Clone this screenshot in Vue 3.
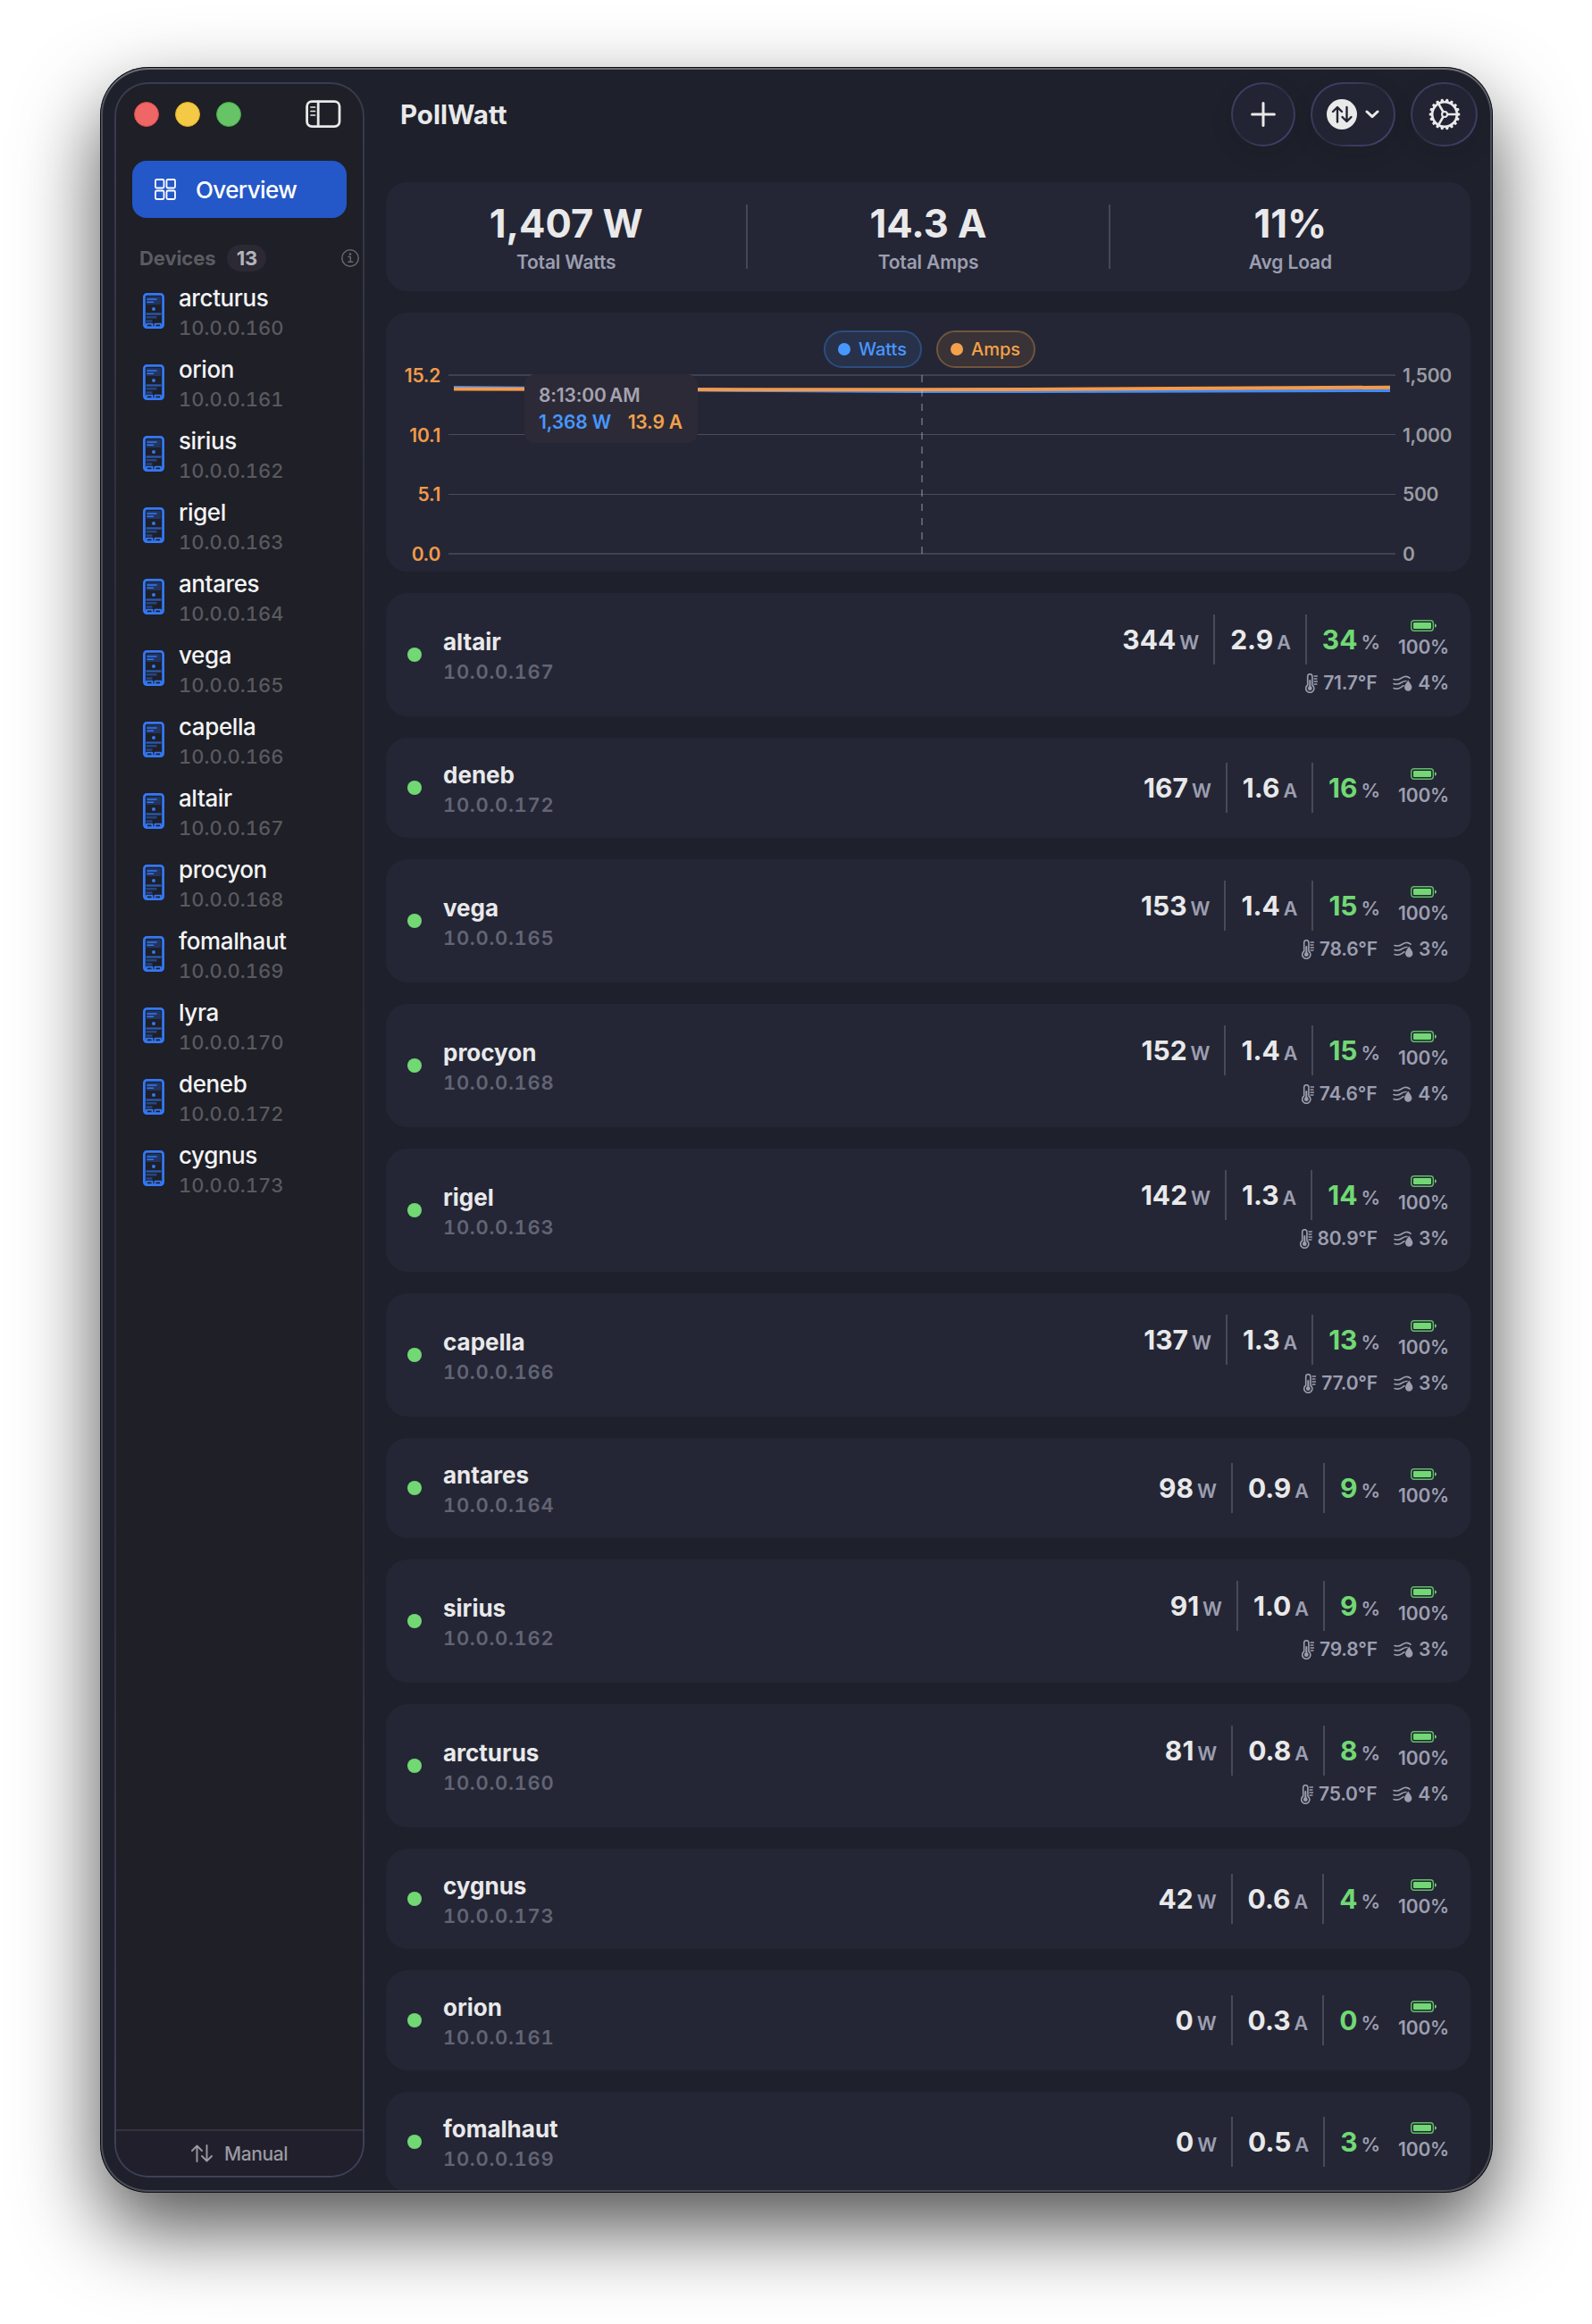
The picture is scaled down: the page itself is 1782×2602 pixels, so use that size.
<template>
  <div class="desktop">
    <div class="window">
      <aside class="sidebar">
        <div class="titlebar">
          <span class="light red"></span>
          <span class="light yellow"></span>
          <span class="light green"></span>
          <svg class="toggle" viewBox="0 0 40 32" width="40" height="32">
            <rect x="1.6" y="1.6" width="36.400" height="28" rx="5.500" class="line" />
            <path d="M14.200 2v27.500" class="line" />
            <path d="M6 8h4.500M6 12.500h4.500M6 17h4.500" class="line thin" />
          </svg>
        </div>

        <nav class="overview">
          <svg viewBox="0 0 24 24" width="24" height="24">
            <rect x="1" y="1" width="9.500" height="9.500" rx="1.500" />
            <rect x="13.500" y="1" width="9.500" height="9.500" rx="1.500" />
            <rect x="1" y="13.500" width="9.500" height="9.500" rx="1.500" />
            <rect x="13.500" y="13.500" width="9.500" height="9.500" rx="1.500" />
          </svg>
          <span>Overview</span>
        </nav>

        <div class="section">
          <span class="section-title">Devices</span>
          <span class="badge">{{ sidebarDevices.length }}</span>
          <svg class="info" viewBox="0 0 20 20" width="20" height="20">
            <circle cx="10" cy="10" r="9.200" />
            <path d="M8 8.500h2.300v5.600M7.800 14.200h5" />
            <circle cx="10" cy="5.600" r="0.700" />
          </svg>
        </div>

        <ul class="devices">
          <li v-for="device in sidebarDevices" :key="device.ip">
            <svg viewBox="0 0 24 40" width="24" height="40">
              <rect x="4" y="4" width="16" height="9" class="tint" />
              <rect x="1.400" y="1.400" width="21.200" height="37.200" rx="3" class="case" />
              <path d="M5 7h10M5 10.300h6.500" class="bright" />
              <circle cx="12" cy="18" r="2" class="dot" />
              <path d="M3.500 23.500h17" class="dim" />
              <path d="M3.500 27.300h12M3.500 31.500h7" class="dimmer" />
              <path d="M4 37v-2.300h6.500v2.300M13.500 37v-2.300h6.500v2.300" class="bright feet" />
            </svg>
            <div>
              <p class="name">{{ device.name }}</p>
              <p class="ip">{{ device.ip }}</p>
            </div>
          </li>
        </ul>

        <footer class="mode">
          <svg viewBox="0 0 24 20" width="24" height="20">
            <path d="M6.500 19V1.500M1 7l5.500-5.500L12 7M17.500 1v17.500M12 13l5.500 5.500L23 13" />
          </svg>
          <span>Manual</span>
        </footer>
      </aside>

      <main class="main">
        <header class="toolbar">
          <h1>PollWatt</h1>
          <button class="tool add">
            <svg viewBox="0 0 28 28" width="28" height="28">
              <path d="M14 1.600v24.800M1.600 14h24.800" />
            </svg>
          </button>
          <button class="tool sort">
            <svg viewBox="0 0 34 34" width="34" height="34">
              <circle cx="17" cy="17" r="17" class="disc" />
              <path d="M12 25.500V9.500M7 14l5-5 5 5M22.500 9v15.500M17.500 20l5 5 5-5" class="arrows" />
            </svg>
            <svg viewBox="0 0 16 10" width="16" height="10">
              <path d="M2 2l6 5.600L14 2" />
            </svg>
          </button>
          <button class="tool gear">
            <svg viewBox="-18 -18 36 36" width="36" height="36">
              <circle r="13.800" />
              <path
                v-for="n in 18"
                :key="n"
                d="M-1.400 -14.500L-0.700 -16.600H0.700L1.400 -14.500Z"
                class="tooth"
                :transform="`rotate(${n * 20 - 10})`"
              />
              <circle r="3" class="hub" />
              <path d="M3.500 0H13M-1.700 -3L-6.700 -11.600M-1.700 3L-6.700 11.600" />
            </svg>
          </button>
        </header>

        <section class="card summary">
          <div v-for="item in totals" :key="item.label" class="total">
            <strong>{{ item.value }}</strong>
            <span>{{ item.label }}</span>
          </div>
        </section>

        <section class="card chart">
          <div class="legend">
            <span class="pill watts"><i></i>Watts</span>
            <span class="pill amps"><i></i>Amps</span>
          </div>
          <div class="plot">
            <div class="axis left">
              <span v-for="tick in ampTicks" :key="tick">{{ tick }}</span>
            </div>
            <svg class="lines" viewBox="0 0 1060 200" width="1060" height="200">
              <path d="M0 0H1060M0 200H1060" class="grid" />
              <path d="M0 66.500H1060M0 133.500H1060" class="grid fine" />
              <path d="M6 14C200 15 350 17.800 530 18S900 17.500 1054 17" class="series watts" />
              <path d="M6 15.500C200 16 350 16.500 530 16.300S900 14 1054 13.700" class="series amps" />
              <path d="M530 0V200" class="cursor" />
            </svg>
            <div class="axis right">
              <span v-for="tick in wattTicks" :key="tick">{{ tick }}</span>
            </div>
            <div class="tooltip">
              <p>8:13:00&#8201;AM</p>
              <p class="readings"><span class="w">1,368 W</span><span class="a">13.9 A</span></p>
            </div>
          </div>
        </section>

        <section v-for="row in rows" :key="row.ip" class="card row">
          <span class="status"></span>
          <div class="who">
            <p class="name">{{ row.name }}</p>
            <p class="ip">{{ row.ip }}</p>
          </div>
          <div class="stats">
            <div class="metrics">
              <span class="metric"><b>{{ row.watts }}</b><small>W</small></span>
              <span class="metric"><b>{{ row.amps }}</b><small>A</small></span>
              <span class="metric load"><b>{{ row.load }}</b><small>%</small></span>
              <span class="battery">
                <svg viewBox="0 0 29 13" width="29" height="13">
                  <rect x="0.700" y="0.700" width="24.600" height="11.600" rx="3" class="shell" />
                  <rect x="3" y="3" width="20" height="7" rx="1" />
                  <path d="M27 4.300c2.400 0.800 2.400 3.600 0 4.400z" />
                </svg>
                100%
              </span>
            </div>
            <!-- only some units have a temperature and humidity probe -->
            <div v-if="row.temp" class="probe">
              <svg viewBox="0 0 14 22" width="14" height="22">
                <path d="M2.700 13V3.300a2.600 2.600 0 0 1 5.200 0V13a4.600 4.600 0 1 1-5.200 0z" />
                <path d="M5.300 8v8" class="mercury" />
                <circle cx="5.300" cy="16.700" r="2.400" class="fill" />
                <path d="M10 3h3.500M10 6h3M10 9h3.500M10 12h3" class="thin" />
              </svg>
              <span>{{ row.temp }}°F</span>
              <svg class="wind" viewBox="0 0 22 18" width="22" height="18">
                <path d="M1 4.500c4 1.500 6 0.500 9-1.500s6-2.500 9 0.200M1 9.500c4 1.500 6 0.500 9-1.500 2-1.300 3.500-1.700 5-1.500M1 14.500c4 1.500 6 0.500 8.500-1.200 1-.8 1.700-1.300 2.500-1.500" />
                <path d="M17.200 5.500c1.500 3 4.200 5 4.200 8a4.200 4.200 0 0 1-8.400 0c0-3 2.700-5 4.200-8z" class="fill" />
              </svg>
              <span>{{ row.humidity }}%</span>
            </div>
          </div>
        </section>
      </main>
    </div>
  </div>
</template>

<script setup>
const sidebarDevices = [
  { name: "arcturus", ip: "10.0.0.160" },
  { name: "orion", ip: "10.0.0.161" },
  { name: "sirius", ip: "10.0.0.162" },
  { name: "rigel", ip: "10.0.0.163" },
  { name: "antares", ip: "10.0.0.164" },
  { name: "vega", ip: "10.0.0.165" },
  { name: "capella", ip: "10.0.0.166" },
  { name: "altair", ip: "10.0.0.167" },
  { name: "procyon", ip: "10.0.0.168" },
  { name: "fomalhaut", ip: "10.0.0.169" },
  { name: "lyra", ip: "10.0.0.170" },
  { name: "deneb", ip: "10.0.0.172" },
  { name: "cygnus", ip: "10.0.0.173" },
];

const totals = [
  { value: "1,407 W", label: "Total Watts" },
  { value: "14.3 A", label: "Total Amps" },
  { value: "11%", label: "Avg Load" },
];

const ampTicks = ["15.2", "10.1", "5.1", "0.0"];
const wattTicks = ["1,500", "1,000", "500", "0"];

// sorted by watts, highest first
const rows = [
  { name: "altair", ip: "10.0.0.167", watts: 344, amps: "2.9", load: 34, temp: "71.7", humidity: 4 },
  { name: "deneb", ip: "10.0.0.172", watts: 167, amps: "1.6", load: 16 },
  { name: "vega", ip: "10.0.0.165", watts: 153, amps: "1.4", load: 15, temp: "78.6", humidity: 3 },
  { name: "procyon", ip: "10.0.0.168", watts: 152, amps: "1.4", load: 15, temp: "74.6", humidity: 4 },
  { name: "rigel", ip: "10.0.0.163", watts: 142, amps: "1.3", load: 14, temp: "80.9", humidity: 3 },
  { name: "capella", ip: "10.0.0.166", watts: 137, amps: "1.3", load: 13, temp: "77.0", humidity: 3 },
  { name: "antares", ip: "10.0.0.164", watts: 98, amps: "0.9", load: 9 },
  { name: "sirius", ip: "10.0.0.162", watts: 91, amps: "1.0", load: 9, temp: "79.8", humidity: 3 },
  { name: "arcturus", ip: "10.0.0.160", watts: 81, amps: "0.8", load: 8, temp: "75.0", humidity: 4 },
  { name: "cygnus", ip: "10.0.0.173", watts: 42, amps: "0.6", load: 4 },
  { name: "orion", ip: "10.0.0.161", watts: 0, amps: "0.3", load: 0 },
  { name: "fomalhaut", ip: "10.0.0.169", watts: 0, amps: "0.5", load: 3 },
];
</script>

<style>
body {
  background: #fff;
}
</style>

<style scoped>
* {
  box-sizing: border-box;
}

p,
h1,
ul {
  margin: 0;
  padding: 0;
}

svg {
  display: block;
  flex: none;
  fill: none;
  stroke-linecap: round;
  stroke-linejoin: round;
}

.desktop {
  height: 2602px;
  padding: 75px 0 0 112px;
  overflow: hidden;
}

.window {
  position: relative;
  display: flex;
  width: 1559px;
  height: 2380px;
  padding: 17px 25px 0 16px;
  border-radius: 54px;
  overflow: hidden;
  background: #1e202b;
  box-shadow: 0 40px 90px rgba(0, 0, 0, 0.68);
  font-family: Inter, "Liberation Sans", sans-serif;
  color: #e9e9ea;
}

.window::after {
  content: "";
  position: absolute;
  inset: 0;
  border-radius: 54px;
  box-shadow:
    inset 0 0 0 1px #0b0c10,
    inset 0 2px 0 1px #6a6e73,
    inset 0 0 0 3px #4a4c57;
}

.sidebar {
  display: flex;
  flex-direction: column;
  flex: none;
  width: 280px;
  height: 2346px;
  border: 2px solid transparent;
  border-radius: 38px;
  background:
    linear-gradient(#1e1f27, #1e1f27) padding-box,
    linear-gradient(170deg, #3a3c50, #2a2b38 30%, #2c2d3a 70%, #41415d) border-box;
}

.titlebar {
  display: flex;
  align-items: center;
  height: 68px;
  margin-bottom: 18px;
  padding-left: 20px;
}

.light {
  width: 28px;
  height: 28px;
  margin-right: 18px;
  border-radius: 50%;
}

.light.red {
  background: #ee6666;
  border: 1px solid #dc4a48;
}

.light.yellow {
  background: #f3c945;
  border: 1px solid #dfae22;
}

.light.green {
  background: #66c466;
  border: 1px solid #43ac43;
}

.toggle {
  margin-left: 54px;
}

.toggle .line {
  stroke: #e9e9e9;
  stroke-width: 2.8;
}

.toggle .thin {
  stroke-width: 1.7;
}

.overview {
  display: flex;
  align-items: center;
  gap: 22px;
  width: 240px;
  height: 64px;
  margin-left: 18px;
  padding-left: 25px;
  border-radius: 16px;
  background: #2458c9;
  color: #fff;
  font-size: 26px;
  font-weight: 500;
  letter-spacing: -0.6px;
}

.overview svg {
  stroke: #fff;
  stroke-width: 1.8;
}

.section {
  display: flex;
  align-items: center;
  height: 38px;
  margin: 26px 4px 0 26px;
  font-size: 22px;
  font-weight: 700;
  letter-spacing: -0.1px;
}

.section-title {
  color: #5b5b61;
}

.badge {
  margin-left: 13px;
  width: 44px;
  border-radius: 15px;
  background: #2a2934;
  color: #b4b4b8;
  line-height: 30px;
  text-align: center;
}

.info {
  margin-left: auto;
  stroke: #66666c;
  stroke-width: 1.5;
}

.devices {
  flex: 1;
  list-style: none;
}

.devices li {
  display: flex;
  align-items: center;
  gap: 16px;
  height: 80px;
  padding-left: 30px;
}

.devices div {
  margin-top: 3px;
}

.name {
  font-size: 26px;
  line-height: 34px;
}

.ip {
  font-size: 22px;
  line-height: 32px;
  font-variant-numeric: tabular-nums;
}

.devices .name {
  color: #f4f4f4;
  font-weight: 500;
  letter-spacing: -0.4px;
}

.devices .ip {
  color: #59595e;
  font-weight: 500;
}

.case {
  stroke: #3478f6;
  stroke-width: 2.8;
}

.tint {
  fill: #22355f;
}

.bright {
  stroke: #3478f6;
  stroke-width: 1.6;
}

.feet {
  stroke-width: 1.8;
}

.dot {
  fill: #3478f6;
}

.dim {
  stroke: #2a58ad;
  stroke-width: 2.4;
  stroke-linecap: butt;
}

.dimmer {
  stroke: #264684;
  stroke-width: 2.4;
  stroke-linecap: butt;
}

.mode {
  display: flex;
  align-items: center;
  justify-content: center;
  gap: 13px;
  height: 52px;
  border-top: 2px solid #35343e;
  border-radius: 0 0 36px 36px;
  background: #201f2b;
  color: #9a9aa2;
  font-size: 21px;
  font-weight: 500;
  letter-spacing: -0.4px;
}

.mode svg {
  stroke: #9a9aa2;
  stroke-width: 1.9;
}

.main {
  display: flex;
  flex-direction: column;
  flex: 1;
  gap: 24px;
  min-width: 0;
  margin-left: 24px;
}

.toolbar {
  display: flex;
  height: 72px;
  margin-bottom: 16px;
  margin-right: -8px;
}

h1 {
  flex: 1;
  padding-left: 16px;
  font-size: 29.5px;
  font-weight: 700;
  line-height: 73px;
}

.tool {
  display: flex;
  align-items: center;
  justify-content: center;
  height: 72px;
  padding: 0;
  border: 2px solid transparent;
  border-radius: 38px;
  background:
    linear-gradient(#222333, #222333) padding-box,
    linear-gradient(135deg, #3f4368, #383b5c 30%, #2a2b40 50%, #383b5c 70%, #42466e) border-box;
  box-shadow: 0 8px 24px rgba(20, 18, 26, 0.12);
}

.tool svg {
  stroke: #e9e9e9;
  stroke-width: 3;
}

.add {
  width: 72px;
}

.sort {
  width: 95px;
  margin: 0 17px;
  gap: 9px;
}

.sort .disc {
  fill: #e9e9e9;
  stroke: none;
}

.sort .arrows {
  stroke: #222333;
  stroke-width: 2.4;
}

.gear {
  width: 75px;
}

.gear svg {
  stroke-width: 2.6;
}

.gear .tooth {
  fill: #e9e9e9;
  stroke-width: 1.4;
}

.gear .hub {
  stroke-width: 2;
}

.card {
  flex: none;
  border-radius: 24px;
  background: #242635;
}

.summary {
  display: flex;
  align-items: center;
  height: 122px;
}

.total {
  display: flex;
  flex: 1;
  flex-direction: column;
  align-items: center;
  height: 72px;
}

.total + .total {
  border-left: 2px solid #454755;
}

.total strong {
  font-size: 43.5px;
  font-weight: 700;
  line-height: 42px;
}

.total span {
  margin-top: 8px;
  color: #9c9eb0;
  font-size: 21px;
  font-weight: 600;
  letter-spacing: -0.15px;
  line-height: 29px;
}

.chart {
  height: 290px;
  padding-top: 20px;
}

.legend {
  display: flex;
  justify-content: center;
  gap: 16px;
  margin-bottom: 8px;
  padding-left: 3px;
}

.pill {
  display: flex;
  align-items: center;
  gap: 9px;
  height: 42px;
  padding: 0 15px 0 14px;
  border: 2px solid;
  border-radius: 21px;
  font-size: 20px;
  font-weight: 500;
}

.pill i {
  width: 14px;
  height: 14px;
  border-radius: 50%;
  background: currentColor;
}

.pill.watts {
  color: #4797ff;
  background: #27314a;
  border-color: #2d4d7d;
}

.pill.amps {
  color: #f3a14b;
  background: #393236;
  border-color: #70543e;
}

.plot {
  position: relative;
  display: flex;
  align-items: center;
  height: 200px;
}

.axis {
  display: flex;
  flex: none;
  flex-direction: column;
  justify-content: space-between;
  height: 226px;
  font-size: 21px;
  font-weight: 600;
  letter-spacing: -0.3px;
  line-height: 26px;
}

.axis span {
  padding-top: 1px;
  height: 26px;
}

.axis.left {
  width: 61px;
  margin-right: 9px;
  color: #f09a4a;
  text-align: right;
}

.axis.right {
  margin-left: 8px;
  color: #9a9ba2;
}

.lines {
  overflow: visible;
}

.grid {
  stroke: #404250;
  stroke-width: 2;
  stroke-linecap: butt;
}

.fine {
  stroke: #4a4c59;
  stroke-width: 1;
}

.series {
  stroke-width: 4;
  stroke-linecap: butt;
}

.series.watts {
  stroke: #3f8cf7;
}

.series.amps {
  stroke: #f4994a;
}

.cursor {
  stroke: rgba(200, 200, 205, 0.35);
  stroke-width: 2;
  stroke-dasharray: 8 8;
  stroke-linecap: butt;
}

.tooltip {
  position: absolute;
  left: 155px;
  top: -1px;
  width: 194px;
  height: 77px;
  padding: 9px 17px 8px 16px;
  border-radius: 12px;
  background: #2c2a37;
  color: #a5a3b0;
  font-size: 21px;
  font-weight: 600;
  letter-spacing: -0.15px;
  line-height: 30px;
  white-space: nowrap;
}

.readings {
  display: flex;
  justify-content: space-between;
}

.w {
  color: #4797ff;
}

.a {
  color: #f3a14b;
}

.row {
  display: flex;
  align-items: center;
  min-height: 112px;
  padding: 24px 24px 24px 24px;
}

.status {
  width: 16px;
  height: 16px;
  border-radius: 50%;
  background: #71d874;
}

.who {
  flex: 1;
  /* a little taller than a plain row's content box, so it must not stretch it */
  margin: 0 0 -3px 24px;
}

.row .name {
  font-weight: 700;
}

.row .ip {
  color: #626473;
  font-weight: 600;
  letter-spacing: 0.7px;
}

.metrics {
  display: flex;
  align-items: center;
  justify-content: flex-end;
  height: 56px;
}

.metric {
  display: flex;
  align-items: baseline;
  gap: 4px;
  height: 56px;
  padding: 0 16px 0 17px;
  line-height: 56px;
}

.metric + .metric {
  border-left: 2px solid #484a58;
}

.metric b {
  font-size: 30px;
}

.metric small {
  color: #9c9eb0;
  font-size: 21.5px;
  font-weight: 600;
}

.metric.load {
  padding-right: 20px;
}

.metric.load b {
  color: #71d874;
}

.battery {
  display: flex;
  flex-direction: column;
  align-items: center;
  color: #9c9eb0;
  font-size: 21px;
  font-weight: 600;
  letter-spacing: -0.2px;
  line-height: 26px;
}

.battery svg {
  margin-bottom: 5px;
  fill: #71d874;
}

.shell {
  fill: none;
  stroke: #63bd69;
  stroke-width: 1.4;
}

.probe {
  display: flex;
  align-items: center;
  justify-content: flex-end;
  height: 34px;
  padding-top: 8px;
  gap: 6px;
  color: #9c9eb0;
  font-size: 21px;
  font-weight: 600;
  letter-spacing: -0.2px;
  line-height: 26px;
}

.probe svg {
  stroke: #9c9eb0;
  stroke-width: 1.6;
}

.probe .fill {
  fill: #9c9eb0;
  stroke: none;
}

.probe .mercury {
  stroke-width: 2;
}

.probe .thin {
  stroke-width: 1.3;
}

.wind {
  margin-left: 12px;
}
</style>
